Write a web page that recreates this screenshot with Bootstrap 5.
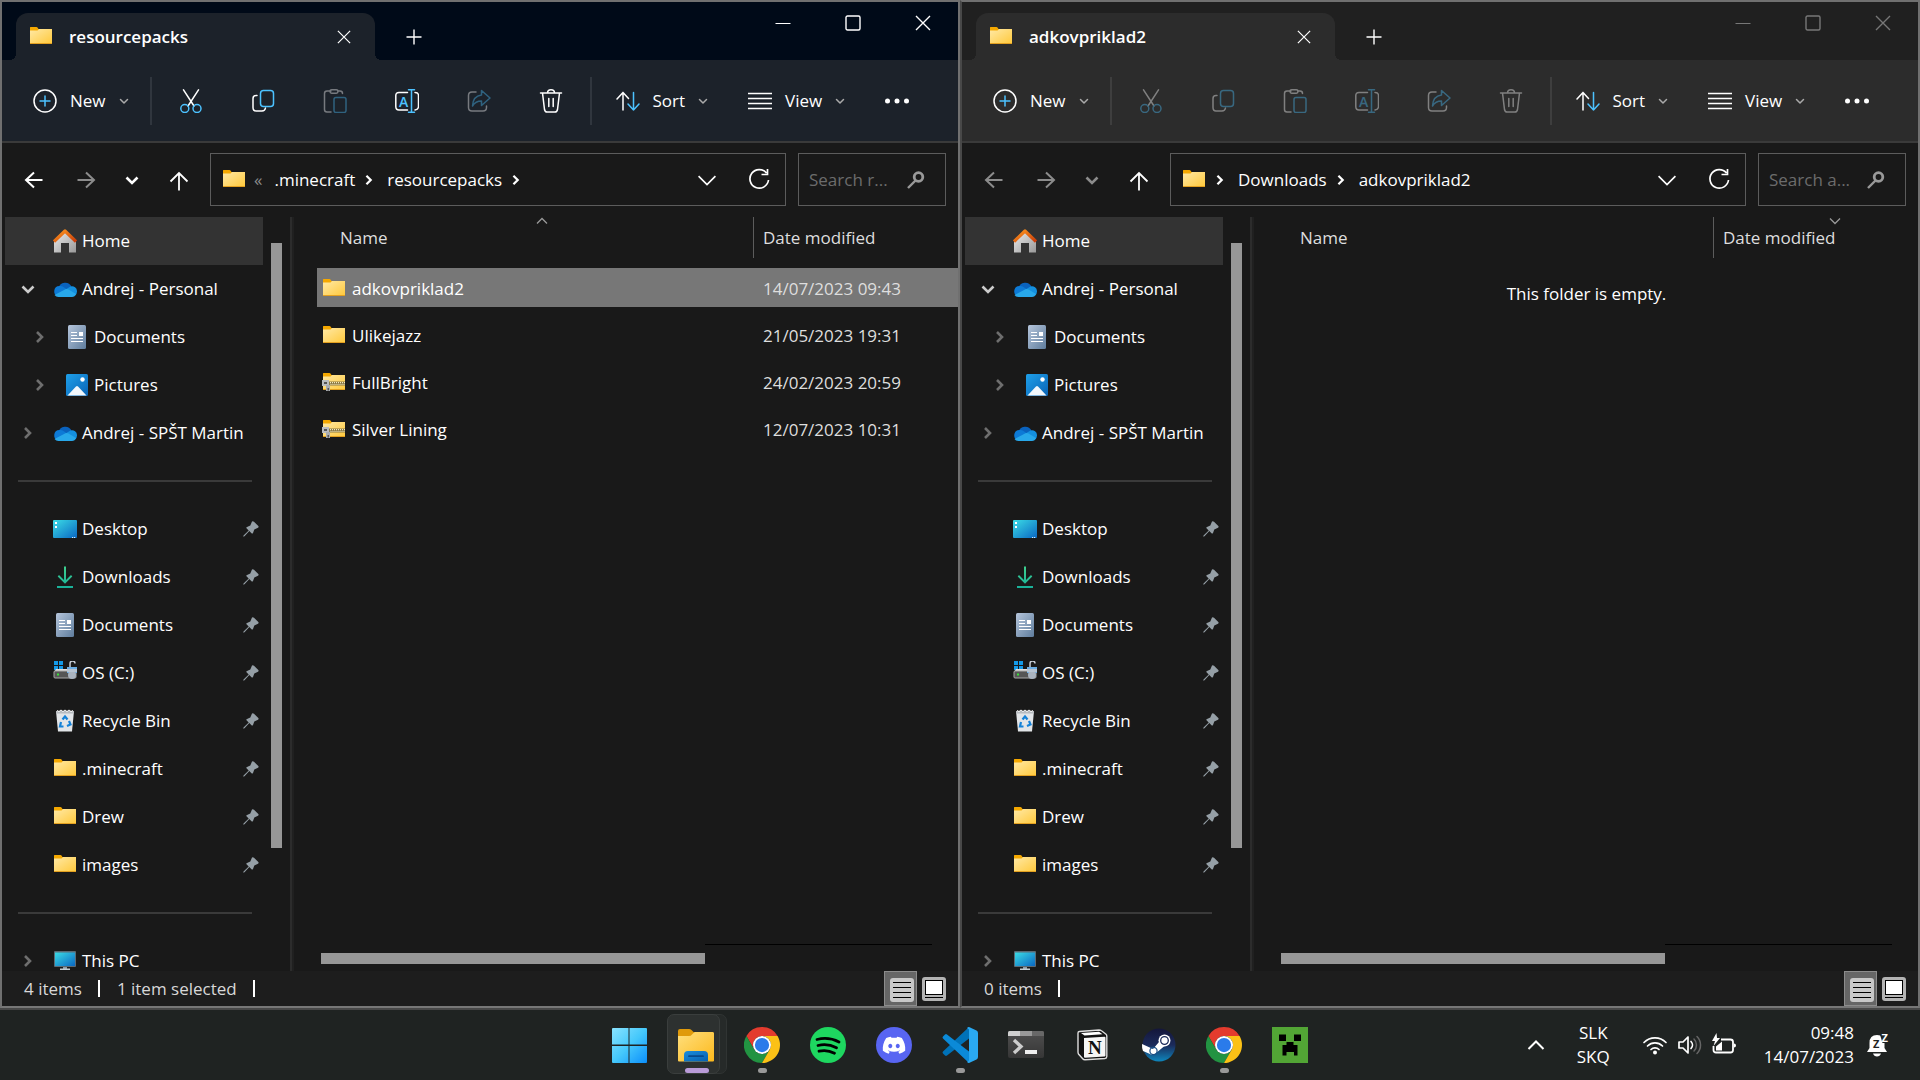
<!DOCTYPE html>
<html lang="en" data-bs-theme="dark">
<head>
<meta charset="utf-8">
<meta name="viewport" content="width=device-width, initial-scale=1">
<title>File Explorer</title>
<link href="https://cdn.jsdelivr.net/npm/bootstrap@5.3.0/dist/css/bootstrap.min.css" rel="stylesheet">
<script src="https://cdn.jsdelivr.net/npm/bootstrap@5.3.0/dist/js/bootstrap.bundle.min.js"></script>
<style>
  body { font-family: "Open Sans", "Noto Sans", sans-serif; font-size: 17px; line-height: 24px; color: #fff; background: #191919; }
  svg { flex: none; display: block; }
  .ln { fill: none; stroke: currentColor; stroke-width: 1.5; stroke-linecap: round; stroke-linejoin: round; }
  .acc { stroke: #4cc2ff; }
  .i24 { width: 24px; height: 24px; }
  .i16 { width: 16px; height: 16px; }
  .plain { background: none; border: 0; padding: 0; color: inherit; display: flex; align-items: center; justify-content: center; text-decoration: none; }
  .plain:disabled { opacity: .4; }
  .desktop { flex: 1 1 0; min-height: 0; }

  .explorer { border: 2px solid #707070; border-bottom-color: #777; flex: 1 1 0; min-width: 0; }
  .explorer.idle { border-left-color: #484848; }
  .titlebar { height: 58px; background: #000a18; padding-left: 14px; }
  .idle .titlebar { background: #202020; }
  .tabitem { width: 359px; height: 47px; background: #1c222a; border-radius: 12px 12px 0 0; padding: 0 18px 0 13px; position: relative; }
  .tabitem::before, .tabitem::after { content: ""; position: absolute; bottom: 0; width: 6px; height: 6px; }
  .tabitem::before { left: -6px; background: radial-gradient(circle at 0 0, transparent 6px, #1c222a 6px); }
  .tabitem::after { right: -6px; background: radial-gradient(circle at 100% 0, transparent 6px, #1c222a 6px); }
  .idle .tabitem { background: #2c2c2c; }
  .idle .tabitem::before { background: radial-gradient(circle at 0 0, transparent 6px, #2c2c2c 6px); }
  .idle .tabitem::after { background: radial-gradient(circle at 100% 0, transparent 6px, #2c2c2c 6px); }
  .tabname { font-weight: 600; }
  .newtab { width: 78px; height: 47px; }
  .capbtn { width: 70px; height: 41px; }
  .idle .capbtn { color: #777; }

  .cmdbar { height: 83px; background: #1c222a; border-bottom: 2px solid #3a3a3a; padding-left: 31px; }
  .idle .cmdbar { background: #2c2c2c; }
  .cmd-text { height: 48px; gap: 13px; }
  .cmd-icon { width: 72px; height: 48px; }
  .vline { width: 2px; height: 48px; background: #30363e; margin: 0 3px 0 21px; }
  .vline.end { margin: 0 24px 0 3px; }
  .idle .vline { background: #3e3e3e; }
  .chev { width: 10px; height: 10px; color: #aaa; }

  .addrbar { height: 74px; padding: 0 12px 1px 6px; }
  .addrbox { height: 53px; border: 1px solid #5c5c5c; min-width: 0; padding-left: 11px; }
  .findbox { width: 148px; height: 53px; border: 1px solid #5c5c5c; margin-left: 12px; padding: 0 20px 0 10px; }
  .findbox input { width: 80px; background: none; border: 0; outline: 0; padding: 0; color: #fff; }
  .findbox input::placeholder { color: #6c6c6c; opacity: 1; }
  .w40 { width: 40px; } .w52 { width: 52px; } .w54 { width: 54px; }
  .dimmed { color: #8c8c8c; }

  .titlebar, .cmdbar, .addrbar, .statusline, .side, .split, .tree, .vscroll, .tabitem, .findbox { flex: none; }
  .panes { flex: 1 1 0; min-height: 0; }
  .side { width: 288px; }
  .tree { width: 258px; margin-left: 3px; }
  .tree a { height: 48px; flex: none; display: flex; align-items: center; color: #fff; text-decoration: none; white-space: nowrap; }
  .tree a.here { background: #333; }
  .tree .exp { width: 48px; display: flex; justify-content: center; padding-right: 3px; color: #6e6e6e; }
  .tree .exp.open { color: #ccc; }
  .tree .kid .exp { width: 60px; padding: 0 0 0 10px; }
  .tree .lbl { margin-left: 5px; }
  .tree .pin { margin-left: auto; margin-right: 4px; color: #959fa6; }
  .tree hr { height: 2px; flex: none; margin: 23px 11px 23px 13px; border: 0; background: #3a3a3a; opacity: 1; }
  .vscroll { width: 11px; margin: 26px 8px 123px 8px; background: #979797; }
  .split { width: 5px; background: #202020; border-left: 2px solid #2c2c2c; border-right: 1px solid #191919; }
  .filepane { padding-left: 22px; min-width: 0; }
  .files { width: 100%; table-layout: fixed; border-collapse: separate; border-spacing: 0 8px; margin-top: -8px; }
  .files th { height: 43px; font-weight: 400; color: #dedede; padding: 0; position: relative; vertical-align: top; }
  .files th span { display: flex; align-items: center; height: 41px; }
  .files th:first-child { width: 437px; }
  .files th:first-child span { padding-left: 23px; border-right: 1px solid #5c5c5c; }
  .files th:last-child span { padding-left: 9px; }
  .sortmark { position: absolute; top: 0; left: 219px; width: 12px; height: 8px; color: #999; }
  .sortmark.down { left: 115px; }
  .files td { height: 39px; padding: 2px 0 0; vertical-align: middle; white-space: nowrap; }
  .files td:last-child { padding-left: 9px; color: #dedede; }
  .files tr.chosen td { background: #777; }
  .files .fname { display: flex; align-items: center; gap: 6px; padding-left: 5px; }
  .empty { text-align: center; margin-top: 6px; padding-right: 22px; }
  .hbar { height: 27px; margin: auto 26px 0 4px; display: flex; }
  .hbar .thumb { flex: 0 0 384px; height: 11px; margin-top: 9px; background: #979797; }
  .hbar .rest { flex: 1; border-top: 1px solid #000; }
  .statusline { height: 35px; background: #1d1d1d; color: #d8d8d8; padding-left: 22px; }
  .statusline i { width: 2px; height: 17px; background: #fff; margin: 0 17px 0 16px; }
  .viewbtn { width: 33px; height: 35px; border: 1px solid transparent; }
  .viewbtn.picked { background: #666; border-color: #8c8c8c; padding: 3px 0 0 2px; }

  .taskbar { height: 72px; flex: none; background: #1f2322; border-top: 2px solid #484848; }
  .app { width: 66px; height: 70px; position: relative; }
  .app svg { width: 36px; height: 36px; }
  .app.run::after { content: ""; position: absolute; bottom: 7px; left: 29px; width: 9px; height: 5px; border-radius: 3px; background: #999; }
  .app.active::after { left: 22px; width: 24px; background: #b99bd8; }
  .app.active svg { position: relative; z-index: 2; }
  .app.active::before, .app .stack { content: ""; position: absolute; left: 4px; top: 4px; width: 53px; height: 60px; border-radius: 7px; background: #2d3130; border: 1px solid #3a3e3d; }
  .app.active::before { z-index: 1; }
  .app.active::after { z-index: 2; }
  .app .stack { left: 11px; background: #262a29; border-color: #303433; }
  .tray { gap: 12px; padding-right: 30px; }
</style>
</head>
<body class="vh-100 d-flex flex-column overflow-hidden">

<svg width="0" height="0" class="position-absolute" aria-hidden="true">
  <defs>
    <linearGradient id="gFold" x1="0" y1="0" x2="1" y2="1"><stop offset="0" stop-color="#ffe9a6"/><stop offset="1" stop-color="#ffc93c"/></linearGradient>
    <linearGradient id="gRoof" x1="0" y1="0" x2="1" y2="1"><stop offset="0" stop-color="#ff9a1f"/><stop offset="1" stop-color="#c93a0a"/></linearGradient>
    <linearGradient id="gWall" x1="0" y1="0" x2="1" y2="1"><stop offset="0" stop-color="#eee"/><stop offset="1" stop-color="#999"/></linearGradient>
    <linearGradient id="gDoc" x1="0" y1="0" x2="1" y2="1"><stop offset="0" stop-color="#b6c6dc"/><stop offset="1" stop-color="#5f7d9d"/></linearGradient>
    <linearGradient id="gPic" x1="0" y1="0" x2="1" y2="1"><stop offset="0" stop-color="#1ea0ea"/><stop offset="1" stop-color="#0a63b5"/></linearGradient>
    <linearGradient id="gDesk" x1="0" y1="0" x2="1" y2="1"><stop offset="0" stop-color="#3bdce6"/><stop offset="1" stop-color="#0a67c2"/></linearGradient>
    <linearGradient id="gDown" x1="0" y1="0" x2="0" y2="1"><stop offset="0" stop-color="#3fcf8e"/><stop offset="1" stop-color="#18b09a"/></linearGradient>
    <linearGradient id="gWin" gradientUnits="userSpaceOnUse" x1="0" y1="0" x2="36" y2="36"><stop offset="0" stop-color="#8be4ff"/><stop offset=".5" stop-color="#45c8fb"/><stop offset="1" stop-color="#0a8dfb"/></linearGradient>
    <linearGradient id="gBig" x1="0" y1="0" x2="1" y2="1"><stop offset="0" stop-color="#ffdf7e"/><stop offset="1" stop-color="#fcb91c"/></linearGradient>
    <linearGradient id="gTray" x1="0" y1="0" x2="1" y2="1"><stop offset="0" stop-color="#1c8ddc"/><stop offset="1" stop-color="#0660b0"/></linearGradient>
    <linearGradient id="gSteam" x1="0" y1="0" x2="0" y2="1"><stop offset="0" stop-color="#14163a"/><stop offset=".5" stop-color="#1b2a5a"/><stop offset="1" stop-color="#0e86bd"/></linearGradient>
    <linearGradient id="gTerm" x1="0" y1="0" x2="0" y2="1"><stop offset="0" stop-color="#505050"/><stop offset="1" stop-color="#363636"/></linearGradient>
  </defs>
  <symbol id="folder" viewBox="0 0 24 24"><path d="M1 2.500q0-.5.500-.5h6q.6 0 1 .5l1 1.500H22.500q.5 0 .5.500V8H1z" fill="#f5a800"/><path d="M1 5.500h7.500L10 4h13v14.500H1z" fill="url(#gFold)"/><path d="M1 18.500h22" stroke="#e3a020"/></symbol>
  <symbol id="zipf" viewBox="0 0 24 24"><use href="#folder"/><path d="M5 10.500h18v4H5z" fill="#8c7a45"/><path d="M8 11.700h15M8.500 13.500h14.500" stroke="#f3e9c0" stroke-width="1.200" stroke-dasharray="1 1"/><path d="M0 9h7v6H0z" fill="#b9bcc0"/><path d="M2 11h3v2H2z" fill="#555"/><path d="M4 14h4v6H4z" fill="#a9acb0"/><path d="M5.500 17h1.500v2.500H5.500z" fill="#555"/></symbol>
  <symbol id="house" viewBox="0 0 24 24"><path d="M1 12 12 2l11 10v11.500H16V14H8v9.500H1z" fill="url(#gWall)"/><path d="M1 12.500 12 2l11 10.500" fill="none" stroke="url(#gRoof)" stroke-width="3.200" stroke-linejoin="round"/></symbol>
  <symbol id="cloud" viewBox="0 0 24 24"><path d="M5.500 11A7 7 0 0 1 18.500 9.500L14 15 5 12z" fill="#0a62bd"/><path d="M6.500 9a5.500 5.500 0 0 1 4 1l9 6.500-12 3H5.500A5.300 5.300 0 0 1 6.500 9z" fill="#0d7ad6"/><path d="M12.500 12.500 17.500 9.500a5 5 0 0 1 6.500 5q0 2.500-2 4z" fill="#1490df"/><path d="M1.500 18l11-5.700q1.500-.6 3 .2L23 17q-1 3-4 3H5.500q-2.500 0-4-2z" fill="#28a8ea"/></symbol>
  <symbol id="doc" viewBox="0 0 24 24"><rect x="3" y="0" width="18" height="24" rx="1.500" fill="url(#gDoc)"/><path d="M6 7.500h6M6 10.500h6M6 13.500h12M6 16.500h12" stroke="#fff" stroke-width="1.200"/><path d="M14 7h4v4h-4z" fill="#fff"/></symbol>
  <symbol id="pic" viewBox="0 0 24 24"><rect x="1" y="1" width="22" height="22" rx="1.500" fill="url(#gPic)"/><path d="M2.500 22.500 11 13.500q1-1 2 0l8.500 9z" fill="#f2f7fc"/><circle cx="17.500" cy="6.500" r="2.200" fill="#fff"/></symbol>
  <symbol id="desk" viewBox="0 0 24 24"><rect x="0" y="3" width="24" height="18" rx="1" fill="url(#gDesk)"/><path d="M2 5h2v2H2zM2 9h2v2H2z" fill="#fff"/><path d="M19 20.500h1.200M21 20.500h1.200" stroke="#cfe9ff"/></symbol>
  <symbol id="down" viewBox="0 0 24 24"><path d="M11 1.500h2V15l5-5 1.300 1.400L12 18.800l-7.300-7.400L6 10l5 5zM4 21h16v2H4z" fill="url(#gDown)"/></symbol>
  <symbol id="drive" viewBox="0 0 24 24"><path d="M1 0h4v4H1zM6 0h4v4H6zM1 5h4v4H1zM6 5h4v4H6z" fill="#149ae8"/><path d="M3 8h19l1 3H1z" fill="#ddd"/><rect x="1" y="10" width="22" height="7" rx="1" fill="#555" stroke="#aaa"/><path d="M4 12.500h2v2H4z" fill="#3be03b"/><path d="M17 6V2.500a2.500 2.500 0 0 1 5 0" fill="none" stroke="#c5cbd3" stroke-width="1.500"/><path d="M14 6h10v6H14z" fill="#6aaee6"/><circle cx="19" cy="14" r="4" fill="#aab4c0"/><path d="M14 8h10v3H14z" fill="#b7c4d2"/></symbol>
  <symbol id="bin" viewBox="0 0 24 24"><path d="M3 2h18l-2 20.500H5z" fill="#e2e5e8"/><path d="M3 2h18l-.3 2.500H3.300z" fill="#b8bcc0"/><path d="M4 1.500l2 1 2-1.500 2 1.500L12 1l2 1.500L16 1l2 1.500 2-1" stroke="#fff" fill="none"/><path d="M9.500 10.500 12 7.500l2.500 3M16 12l1.500 3.500-3.500 1.500M10.500 17.500H7L8 13" fill="none" stroke="#1582d8" stroke-width="2.200"/></symbol>
  <symbol id="pc" viewBox="0 0 24 24"><rect x="1" y="2" width="22" height="16" rx="1" fill="#5c6a74"/><path d="M2 3.500h20V17H2z" fill="url(#gDesk)"/><path d="M10 18h4v2h-4z" fill="#8c9aa5"/><path d="M7 19.500h10V21H7z" fill="#c3ccd3"/></symbol>
  <symbol id="pin" viewBox="0 0 16 16"><path d="M9 .500Q10 0 11 .800L15.300 5q.8 1-.3 1.700L11.300 8.500 10 12q-.5 1-1.500.3L6.300 10 1.500 15.300.300 15.700.500 14.500 5.700 9.500 3.500 7.300Q3 6.300 4 6L7.300 4.500z" fill="currentColor"/></symbol>
  <symbol id="cR" viewBox="0 0 14 14"><path d="M4 2l5 5-5 5" fill="none" stroke="currentColor" stroke-width="2.600"/></symbol>
  <symbol id="cD" viewBox="0 0 14 14"><path d="M1.500 4.500 7 10l5.500-5.500" fill="none" stroke="currentColor" stroke-width="2.600"/></symbol>
  <symbol id="chevD" viewBox="0 0 10 10"><path class="ln" d="M1.500 3.500 5 7l3.500-3.500"/></symbol>
  <symbol id="xx" viewBox="0 0 16 16"><path d="M1 1l14 14M15 1 1 15" fill="none" stroke="currentColor" stroke-width="1.400"/></symbol>
  <symbol id="plus" viewBox="0 0 16 16"><path d="M8 .500v15M.500 8h15" fill="none" stroke="currentColor" stroke-width="1.400"/></symbol>
  <symbol id="min" viewBox="0 0 16 16"><path d="M.500 8.500h15" stroke="currentColor"/></symbol>
  <symbol id="max" viewBox="0 0 16 16"><rect x="1" y="1" width="14" height="14" rx="1.500" fill="none" stroke="currentColor" stroke-width="1.400"/></symbol>
  <symbol id="newi" viewBox="0 0 24 24"><circle class="ln" cx="12" cy="12" r="11"/><path class="ln acc" d="M12 7v10M7 12h10"/></symbol>
  <symbol id="cut" viewBox="0 0 24 24"><path class="ln" d="M4.500.800 15 17M19.500.800 9 17"/><circle class="ln acc" cx="5.800" cy="19.500" r="4"/><circle class="ln acc" cx="18" cy="19.500" r="4"/></symbol>
  <symbol id="copy" viewBox="0 0 24 24"><path class="ln" d="M6 6.500H5Q2 6.500 2 9.500v9Q2 22 5 22h6q3 0 3.500-3"/><rect class="ln acc" x="9.500" y="1.500" width="13" height="16" rx="3"/></symbol>
  <symbol id="paste" viewBox="0 0 24 24"><path class="ln" d="M8 2H4Q1.500 2 1.500 4.500v16Q1.500 23 4 23h4M15 2h2q2.500 0 2.500 2.500"/><rect class="ln" x="7" y=".8" width="8" height="3.500" rx="1.700"/><rect class="ln acc" x="11" y="8.500" width="12" height="15" rx="2"/></symbol>
  <symbol id="ren" viewBox="0 0 24 24"><path class="ln" d="M12.500 3.500H4Q.800 3.500.800 6.500v11q0 3.500 3.200 3.500h8.500M20 3.500q3.500 0 3.500 3v11q0 3-3.500 3.500"/><path class="ln acc" d="M13.500.800h6M13.500 23.200h6M16.500.800v22.400"/><text x="4" y="17.500" font-family="Open Sans, sans-serif" font-size="14" font-weight="600" fill="#4cc2ff">A</text></symbol>
  <symbol id="share" viewBox="0 0 24 24"><path class="ln" d="M9 3H5Q1.500 3 1.500 6.500v12Q1.500 22 5 22h11q3.500 0 3.500-3.500V17"/><path class="ln acc" d="M14.500 1.500 23 9l-8.500 7.500V12Q8.500 12 5.500 17 6 7 14.500 6z"/></symbol>
  <symbol id="trash" viewBox="0 0 24 24"><path class="ln" d="M1.500 4h21M8.500 4q0-3.200 3.500-3.200T15.500 4M3.500 4l2 16.500Q6 23 8 23h8q2 0 2.500-2.500L20.500 4M9.800 9.500v8M14.200 9.500v8"/></symbol>
  <symbol id="sort" viewBox="0 0 24 24"><path class="ln" d="M7 21V3.500M1 10l6-6.500 5.500 6"/><path class="ln acc" d="M17.500 3.500V21M12 15l5.500 6 5.500-6"/></symbol>
  <symbol id="view" viewBox="0 0 24 24"><path d="M0 4.500h24M0 9.500h24M0 14.500h24M0 19.500h24" stroke="currentColor" stroke-width="1.500"/></symbol>
  <symbol id="dots" viewBox="0 0 24 24"><g fill="currentColor"><circle cx="2.500" cy="12" r="2.500"/><circle cx="12" cy="12" r="2.500"/><circle cx="21.500" cy="12" r="2.500"/></g></symbol>
  <symbol id="left" viewBox="0 0 24 24"><path d="M20.500 12H4M12 4.500 4 12l8 7.500" fill="none" stroke="currentColor" stroke-width="2"/></symbol>
  <symbol id="right" viewBox="0 0 24 24"><path d="M3.500 12H20M12 4.500 20 12l-8 7.500" fill="none" stroke="currentColor" stroke-width="2"/></symbol>
  <symbol id="up" viewBox="0 0 24 24"><path d="M12 22.500V5M3.500 13.500 12 5l8.500 8.500" fill="none" stroke="currentColor" stroke-width="1.800"/></symbol>
  <symbol id="bigD" viewBox="0 0 16 16"><path d="M.500 4.500 8 12l7.500-7.500" fill="none" stroke="currentColor" stroke-width="1.500"/></symbol>
  <symbol id="refresh" viewBox="0 0 24 24"><path d="M19.500 5A9.300 9.300 0 1 0 21.500 12M14.500 6.500h6V1" fill="none" stroke="currentColor" stroke-width="1.700"/></symbol>
  <symbol id="lens" viewBox="0 0 18 18"><circle cx="11.500" cy="6" r="4.300" fill="none" stroke="currentColor" stroke-width="2.800"/><path d="M8.500 9.500 1 17" stroke="currentColor" stroke-width="2.400"/></symbol>
  <symbol id="vList" viewBox="0 0 24 24"><rect width="24" height="24" rx="3" fill="#c8c8c8"/><path d="M3 4.500h18M3 9.500h18M3 14.500h18M3 19.500h18" stroke="#000"/></symbol>
  <symbol id="vBig" viewBox="0 0 24 24"><rect width="24" height="24" rx="3" fill="#b4b4b4"/><rect x="3.500" y="3.500" width="17" height="14" fill="#fff" stroke="#000"/><path d="M3 20.500h18" stroke="#000"/></symbol>
  <symbol id="tip" viewBox="0 0 12 8"><path d="M1 6.500l5-5 5 5" fill="none" stroke="currentColor" stroke-width="1.300"/></symbol>
  <symbol id="tipD" viewBox="0 0 12 8"><path d="M1 1.500l5 5 5-5" fill="none" stroke="currentColor" stroke-width="1.300"/></symbol>
  <symbol id="chrome" viewBox="0 0 48 48"><path d="M24 12H44.780A24 24 0 0 0 3.210 12L13.610 30A12 12 0 0 1 24 12Z" fill="#e33b2e"/><path d="M34.390 30 24 48A24 24 0 0 1 3.210 12L13.610 30A12 12 0 0 0 34.390 30Z" fill="#229342"/><path d="M24 12A12 12 0 0 1 34.390 30L24 48A24 24 0 0 0 44.780 12Z" fill="#fbc116"/><circle cx="24" cy="24" r="12" fill="#fff"/><circle cx="24" cy="24" r="9.500" fill="#2a7bea"/></symbol>
</svg>

<main class="desktop d-flex">

  <section class="explorer d-flex flex-column" aria-label="resourcepacks">
    <header class="titlebar d-flex">
      <div class="tabitem d-flex align-items-center align-self-end">
        <svg class="i24"><use href="#folder"/></svg>
        <span class="tabname ms-3">resourcepacks</span>
        <button class="plain ms-auto" aria-label="Close tab"><svg width="26" height="14"><use href="#xx"/></svg></button>
      </div>
      <button class="plain newtab align-self-end" aria-label="New tab"><svg class="i16"><use href="#plus"/></svg></button>
      <div class="d-flex ms-auto">
        <button class="plain capbtn" aria-label="Minimize"><svg class="i16"><use href="#min"/></svg></button>
        <button class="plain capbtn" aria-label="Maximize"><svg class="i16"><use href="#max"/></svg></button>
        <button class="plain capbtn" aria-label="Close"><svg class="i16"><use href="#xx"/></svg></button>
      </div>
    </header>
    <div class="cmdbar d-flex align-items-center" role="toolbar">
      <button class="plain cmd-text"><svg class="i24"><use href="#newi"/></svg>New <svg class="chev"><use href="#chevD"/></svg></button>
      <div class="vline"></div>
      <button class="plain cmd-icon" aria-label="Cut"><svg class="i24"><use href="#cut"/></svg></button>
      <button class="plain cmd-icon" aria-label="Copy"><svg class="i24"><use href="#copy"/></svg></button>
      <button class="plain cmd-icon" aria-label="Paste" disabled><svg class="i24"><use href="#paste"/></svg></button>
      <button class="plain cmd-icon" aria-label="Rename"><svg class="i24"><use href="#ren"/></svg></button>
      <button class="plain cmd-icon" aria-label="Share" disabled><svg class="i24"><use href="#share"/></svg></button>
      <button class="plain cmd-icon" aria-label="Delete"><svg class="i24"><use href="#trash"/></svg></button>
      <div class="vline end"></div>
      <button class="plain cmd-text"><svg class="i24"><use href="#sort"/></svg>Sort <svg class="chev"><use href="#chevD"/></svg></button>
      <button class="plain cmd-text ms-4 ps-3"><svg class="i24"><use href="#view"/></svg>View <svg class="chev"><use href="#chevD"/></svg></button>
      <button class="plain cmd-icon ms-3" aria-label="More"><svg class="i24"><use href="#dots"/></svg></button>
    </div>
    <div class="addrbar d-flex align-items-center">
      <button class="plain w52" aria-label="Back"><svg class="i24"><use href="#left"/></svg></button>
      <button class="plain w52 dimmed" aria-label="Forward"><svg class="i24"><use href="#right"/></svg></button>
      <button class="plain w40" aria-label="Recent"><svg width="14" height="14"><use href="#cD"/></svg></button>
      <button class="plain w54 me-1" aria-label="Up"><svg class="i24"><use href="#up"/></svg></button>
      <div class="addrbox d-flex align-items-center flex-grow-1">
        <svg class="i24"><use href="#folder"/></svg>
        <span class="dimmed ms-2">«</span>
        <a href="#" class="plain ms-2 ps-1">.minecraft</a>
        <svg width="12" height="12" class="mx-2"><use href="#cR"/></svg>
        <a href="#" class="plain ps-1">resourcepacks</a>
        <svg width="12" height="12" class="ms-2"><use href="#cR"/></svg>
        <button class="plain w52 ms-auto" aria-label="Previous locations"><svg width="18" height="18"><use href="#bigD"/></svg></button>
        <button class="plain w52" aria-label="Refresh"><svg class="i24"><use href="#refresh"/></svg></button>
      </div>
      <div class="findbox d-flex align-items-center justify-content-between">
        <input type="text" placeholder="Search r..." aria-label="Search resourcepacks">
        <svg width="18" height="18" color="#999"><use href="#lens"/></svg>
      </div>
    </div>
    <div class="panes d-flex">
      <div class="side d-flex overflow-hidden"></div>
      <div class="split"></div>
      <div class="filepane d-flex flex-column flex-grow-1">
        <table class="files">
          <thead><tr><th scope="col"><span>Name</span><svg class="sortmark"><use href="#tip"/></svg></th><th scope="col"><span>Date modified</span></th></tr></thead>
          <tbody>
            <tr class="chosen"><td><div class="fname"><svg class="i24"><use href="#folder"/></svg>adkovpriklad2</div></td><td>14/07/2023 09:43</td></tr>
            <tr><td><div class="fname"><svg class="i24"><use href="#folder"/></svg>Ulikejazz</div></td><td>21/05/2023 19:31</td></tr>
            <tr><td><div class="fname"><svg class="i24"><use href="#zipf"/></svg>FullBright</div></td><td>24/02/2023 20:59</td></tr>
            <tr><td><div class="fname"><svg class="i24"><use href="#zipf"/></svg>Silver Lining</div></td><td>12/07/2023 10:31</td></tr>
          </tbody>
        </table>
        <div class="hbar"><div class="thumb"></div><div class="rest"></div></div>
      </div>
    </div>
    <footer class="statusline d-flex align-items-center">
      <span>4 items</span><i></i><span>1 item selected</span><i></i>
      <button class="plain viewbtn picked ms-auto" aria-label="Details view"><svg class="i24"><use href="#vList"/></svg></button>
      <button class="plain viewbtn me-2" aria-label="Large icons"><svg class="i24"><use href="#vBig"/></svg></button>
    </footer>
  </section>

  <section class="explorer idle d-flex flex-column" aria-label="adkovpriklad2">
    <header class="titlebar d-flex">
      <div class="tabitem d-flex align-items-center align-self-end">
        <svg class="i24"><use href="#folder"/></svg>
        <span class="tabname ms-3">adkovpriklad2</span>
        <button class="plain ms-auto" aria-label="Close tab"><svg width="26" height="14"><use href="#xx"/></svg></button>
      </div>
      <button class="plain newtab align-self-end" aria-label="New tab"><svg class="i16"><use href="#plus"/></svg></button>
      <div class="d-flex ms-auto">
        <button class="plain capbtn" aria-label="Minimize"><svg class="i16"><use href="#min"/></svg></button>
        <button class="plain capbtn" aria-label="Maximize"><svg class="i16"><use href="#max"/></svg></button>
        <button class="plain capbtn" aria-label="Close"><svg class="i16"><use href="#xx"/></svg></button>
      </div>
    </header>
    <div class="cmdbar d-flex align-items-center" role="toolbar">
      <button class="plain cmd-text"><svg class="i24"><use href="#newi"/></svg>New <svg class="chev"><use href="#chevD"/></svg></button>
      <div class="vline"></div>
      <button class="plain cmd-icon" aria-label="Cut" disabled><svg class="i24"><use href="#cut"/></svg></button>
      <button class="plain cmd-icon" aria-label="Copy" disabled><svg class="i24"><use href="#copy"/></svg></button>
      <button class="plain cmd-icon" aria-label="Paste" disabled><svg class="i24"><use href="#paste"/></svg></button>
      <button class="plain cmd-icon" aria-label="Rename" disabled><svg class="i24"><use href="#ren"/></svg></button>
      <button class="plain cmd-icon" aria-label="Share" disabled><svg class="i24"><use href="#share"/></svg></button>
      <button class="plain cmd-icon" aria-label="Delete" disabled><svg class="i24"><use href="#trash"/></svg></button>
      <div class="vline end"></div>
      <button class="plain cmd-text"><svg class="i24"><use href="#sort"/></svg>Sort <svg class="chev"><use href="#chevD"/></svg></button>
      <button class="plain cmd-text ms-4 ps-3"><svg class="i24"><use href="#view"/></svg>View <svg class="chev"><use href="#chevD"/></svg></button>
      <button class="plain cmd-icon ms-3" aria-label="More"><svg class="i24"><use href="#dots"/></svg></button>
    </div>
    <div class="addrbar d-flex align-items-center">
      <button class="plain w52 dimmed" aria-label="Back"><svg class="i24"><use href="#left"/></svg></button>
      <button class="plain w52 dimmed" aria-label="Forward"><svg class="i24"><use href="#right"/></svg></button>
      <button class="plain w40 dimmed" aria-label="Recent"><svg width="14" height="14"><use href="#cD"/></svg></button>
      <button class="plain w54 me-1" aria-label="Up"><svg class="i24"><use href="#up"/></svg></button>
      <div class="addrbox d-flex align-items-center flex-grow-1">
        <svg class="i24"><use href="#folder"/></svg>
        <svg width="12" height="12" class="mx-2"><use href="#cR"/></svg>
        <a href="#" class="plain ps-1">Downloads</a>
        <svg width="12" height="12" class="mx-2"><use href="#cR"/></svg>
        <a href="#" class="plain ps-1">adkovpriklad2</a>
        <button class="plain w52 ms-auto" aria-label="Previous locations"><svg width="18" height="18"><use href="#bigD"/></svg></button>
        <button class="plain w52" aria-label="Refresh"><svg class="i24"><use href="#refresh"/></svg></button>
      </div>
      <div class="findbox d-flex align-items-center justify-content-between">
        <input type="text" placeholder="Search a..." aria-label="Search adkovpriklad2">
        <svg width="18" height="18" color="#999"><use href="#lens"/></svg>
      </div>
    </div>
    <div class="panes d-flex">
      <div class="side d-flex overflow-hidden"></div>
      <div class="split"></div>
      <div class="filepane d-flex flex-column flex-grow-1">
        <table class="files">
          <thead><tr><th scope="col"><span>Name</span></th><th scope="col"><span>Date modified</span><svg class="sortmark down"><use href="#tipD"/></svg></th></tr></thead>
        </table>
        <div class="empty pt-2">This folder is empty.</div>
        <div class="hbar"><div class="thumb"></div><div class="rest"></div></div>
      </div>
    </div>
    <footer class="statusline d-flex align-items-center">
      <span>0 items</span><i></i>
      <button class="plain viewbtn picked ms-auto" aria-label="Details view"><svg class="i24"><use href="#vList"/></svg></button>
      <button class="plain viewbtn me-2" aria-label="Large icons"><svg class="i24"><use href="#vBig"/></svg></button>
    </footer>
  </section>
</main>

<template id="sidebar">
  <nav class="tree d-flex flex-column" aria-label="Folders">
    <a href="#" class="here"><span class="exp"></span><svg class="i24"><use href="#house"/></svg><span class="lbl">Home</span></a>
    <a href="#"><span class="exp open"><svg width="14" height="14"><use href="#cD"/></svg></span><svg class="i24"><use href="#cloud"/></svg><span class="lbl">Andrej - Personal</span></a>
    <a href="#" class="kid"><span class="exp"><svg width="14" height="14"><use href="#cR"/></svg></span><svg class="i24"><use href="#doc"/></svg><span class="lbl">Documents</span></a>
    <a href="#" class="kid"><span class="exp"><svg width="14" height="14"><use href="#cR"/></svg></span><svg class="i24"><use href="#pic"/></svg><span class="lbl">Pictures</span></a>
    <a href="#"><span class="exp"><svg width="14" height="14"><use href="#cR"/></svg></span><svg class="i24"><use href="#cloud"/></svg><span class="lbl">Andrej - SPŠT Martin</span></a>
    <hr>
    <a href="#"><span class="exp"></span><svg class="i24"><use href="#desk"/></svg><span class="lbl">Desktop</span><svg class="pin i16"><use href="#pin"/></svg></a>
    <a href="#"><span class="exp"></span><svg class="i24"><use href="#down"/></svg><span class="lbl">Downloads</span><svg class="pin i16"><use href="#pin"/></svg></a>
    <a href="#"><span class="exp"></span><svg class="i24"><use href="#doc"/></svg><span class="lbl">Documents</span><svg class="pin i16"><use href="#pin"/></svg></a>
    <a href="#"><span class="exp"></span><svg class="i24"><use href="#drive"/></svg><span class="lbl">OS (C:)</span><svg class="pin i16"><use href="#pin"/></svg></a>
    <a href="#"><span class="exp"></span><svg class="i24"><use href="#bin"/></svg><span class="lbl">Recycle Bin</span><svg class="pin i16"><use href="#pin"/></svg></a>
    <a href="#"><span class="exp"></span><svg class="i24"><use href="#folder"/></svg><span class="lbl">.minecraft</span><svg class="pin i16"><use href="#pin"/></svg></a>
    <a href="#"><span class="exp"></span><svg class="i24"><use href="#folder"/></svg><span class="lbl">Drew</span><svg class="pin i16"><use href="#pin"/></svg></a>
    <a href="#"><span class="exp"></span><svg class="i24"><use href="#folder"/></svg><span class="lbl">images</span><svg class="pin i16"><use href="#pin"/></svg></a>
    <hr>
    <a href="#"><span class="exp"><svg width="14" height="14"><use href="#cR"/></svg></span><svg class="i24"><use href="#pc"/></svg><span class="lbl">This PC</span></a>
  </nav>
  <div class="vscroll"></div>
</template>

<footer class="taskbar d-flex">
  <div class="flex-fill w-25"></div>
  <div class="d-flex">
    <button class="plain app" aria-label="Start"><svg viewBox="0 0 36 36"><path d="M0 2Q0 1 1 1H16.500V17.500H0zM17.500 1H34q1 0 1 1V17.500H17.500zM0 19H16.500V36H1q-1 0-1-1zM17.500 19H35V35q0 1-1 1H17.500z" fill="url(#gWin)"/></svg></button>
    <button class="plain app run active" aria-label="File Explorer"><span class="stack"></span><svg viewBox="0 0 36 36"><path d="M0 4q0-2 2-2h9q1.500 0 2.500 1l2 2H34q2 0 2 2v8H0z" fill="#e09a0b"/><path d="M0 9h11q2 0 3-1.500T17 5h17.500Q36 5 36 6.500V33.500q0 1-1 1H1q-1 0-1-1z" fill="url(#gBig)"/><path d="M6 34.500V28q0-4 4-4h16q4 0 4 4v6.500z" fill="url(#gTray)"/><path d="M11 29.200h14" stroke="#084a8c" stroke-width="1.800" stroke-linecap="round"/></svg></button>
    <button class="plain app run" aria-label="Chrome"><svg><use href="#chrome"/></svg></button>
    <button class="plain app" aria-label="Spotify"><svg viewBox="0 0 36 36"><circle cx="18" cy="18" r="18" fill="#1ed760"/><path d="M7 12.500q11.500-3 22 2.500M8 18.500q9.500-2.500 18.500 2.300M9 24.200q8-2 15.500 2" fill="none" stroke="#000" stroke-width="2.800" stroke-linecap="round"/></svg></button>
    <button class="plain app" aria-label="Discord"><svg viewBox="-50 -66 228 228"><circle cx="64" cy="48" r="114" fill="#5865f2"/><path fill="#fff" transform="translate(-7 -5) scale(1.120)" d="M107.700,8.070A105.150,105.150,0,0,0,81.470,0a72.060,72.060,0,0,0-3.360,6.830A97.680,97.680,0,0,0,49,6.830,72.370,72.370,0,0,0,45.640,0,105.890,105.890,0,0,0,19.390,8.090C2.790,32.650-1.710,56.600.540,80.210h0A105.730,105.730,0,0,0,32.710,96.360,77.700,77.700,0,0,0,39.600,85.250a68.420,68.420,0,0,1-10.850-5.180c.910-.660,1.800-1.340,2.660-2a75.570,75.570,0,0,0,64.320,0c.870.710,1.760,1.390,2.660,2a68.680,68.680,0,0,1-10.870,5.190,77,77,0,0,0,6.890,11.100A105.250,105.250,0,0,0,126.600,80.220h0C129.240,52.840,122.090,29.110,107.700,8.070ZM42.450,65.690C36.180,65.690,31,60,31,53s5-12.740,11.430-12.740S54,46,53.890,53,48.840,65.690,42.450,65.690Zm42.240,0C78.410,65.690,73.250,60,73.250,53s5-12.740,11.440-12.740S96.230,46,96.120,53,91.080,65.690,84.690,65.690Z"/></svg></button>
    <button class="plain app run" aria-label="Visual Studio Code"><svg viewBox="0 0 36 36"><path d="M27 0 1 24.500q-1 1 0 2l2 2q1 .8 2 0L27 11.500z" fill="#0072b8"/><path d="M27 36 1 11.500q-1-1 0-2l2-2q1-.8 2 0L27 24.500z" fill="#0b8ad8"/><path d="M27 0l7.500 3.500Q36 4.200 36 6v24q0 1.800-1.500 2.500L27 36q-1 0-2-1l2-1.500V2.500L25 1q1-1 2-1z" fill="#2aa9f2"/></svg></button>
    <button class="plain app" aria-label="Terminal"><svg viewBox="0 0 36 36"><rect y="4" width="36" height="27" rx="2" fill="url(#gTerm)"/><path d="M0 9V5.500Q0 4 1.500 4H12v5z" fill="#d0d0d0"/><path d="M12 4h12v5H12z" fill="#999"/><path d="M24 4h10.500Q36 4 36 5.500V9H24z" fill="#686868"/><path d="M6 13l7 6.500L6 26" fill="none" stroke="#ccc" stroke-width="3.400"/><path d="M17 23h12v4H17z" fill="#eee"/></svg></button>
    <button class="plain app" aria-label="Notion"><svg viewBox="0 0 36 36"><path d="M5.500 4.500 25 3q1.500 0 2.500.8l4.500 3.400q.8.600.8 2V29.500q0 1.800-2 2L11 32.800q-1.500 0-2.500-1.300L4.500 27Q4 26 4 25V6q0-1.400 1.500-1.500z" fill="#111" stroke="#ddd" stroke-width="1.400"/><path d="M10 11l20.500-1.200q1 0 1 1V28.500q0 1-1 1.100L11 30.800q-1 0-1-1z" fill="#f6f6f6"/><path d="M7 6l18-1.200 3.500 2.400-18 1.200z" fill="#fff"/><text x="20.800" y="26.800" font-family="Liberation Serif, serif" font-weight="700" font-size="19" text-anchor="middle" fill="#111">N</text></svg></button>
    <button class="plain app" aria-label="Steam"><svg viewBox="0 0 36 36"><circle cx="19" cy="18" r="16.500" fill="url(#gSteam)"/><path d="M2 17 13 22l6-7 8 2-11 9a4.500 4.500 0 0 1-6 1L3 24A17 17 0 0 1 2 17z" fill="#fff"/><circle cx="13.500" cy="24" r="3.600" fill="none" stroke="#1b4f85" stroke-width="1.200"/><circle cx="24.500" cy="13.500" r="6" fill="#fff"/><circle cx="24.500" cy="13.500" r="3.800" fill="#fff" stroke="#1b2a5a" stroke-width="1.300"/></svg></button>
    <button class="plain app run" aria-label="Chrome profile"><svg><use href="#chrome"/></svg></button>
    <button class="plain app" aria-label="Minecraft"><svg viewBox="0 0 36 36"><path d="M0 0h36v36H0z" fill="#52a535"/><path d="M7 7.500h7v6.500H7zM22 7.500h7v6.500h-7zM14.500 15h7v3h4v10.500H22V25h-7.500v3.500H10.500V18h4z" fill="#000"/></svg></button>
  </div>
  <div class="tray flex-fill w-25 d-flex align-items-center justify-content-end">
    <button class="plain" aria-label="Hidden icons"><svg width="18" height="12" viewBox="0 0 18 12"><path d="M1.500 10 9 2.500l7.500 7.500" fill="none" stroke="currentColor" stroke-width="2"/></svg></button>
    <button class="plain text-center mx-3 px-1">SLK<br>SKQ</button>
    <button class="plain gap-2 me-3" aria-label="Network, volume, battery">
      <svg width="26" height="24" viewBox="0 0 24 24"><path d="M1 9.500a15.500 15.500 0 0 1 22 0M4.500 13a10.600 10.600 0 0 1 15 0M8 16.500a5.700 5.700 0 0 1 8 0" fill="none" stroke="#fff" stroke-width="1.700" stroke-linecap="round"/><circle cx="12" cy="19.500" r="2" fill="#fff"/></svg>
      <svg width="28" height="24" viewBox="0 0 26 24"><path d="M2 9h4l5-5v16l-5-5H2z" fill="none" stroke="#fff" stroke-width="1.700" stroke-linejoin="round"/><path d="M14 8.500a5 5 0 0 1 0 7" fill="none" stroke="#fff" stroke-width="1.700" stroke-linecap="round"/><path d="M17 6a8.500 8.500 0 0 1 0 12M20 3.500a12 12 0 0 1 0 17" fill="none" stroke="#666" stroke-width="1.500" stroke-linecap="round"/></svg>
      <svg class="i24" viewBox="0 0 24 24"><path d="M9 6.500h9.500Q21 6.500 21 9v8q0 2.500-2.500 2.500H4Q1.500 19.500 1.500 17v-4" fill="none" stroke="#fff" stroke-width="1.800"/><path d="M22 10.500q2 0 2 2t-2 2zM4 17.500V13.500L10 8.500V17.500zM4.500 0 0 8h3L1.500 13 8 5H5z" fill="#fff"/></svg>
    </button>
    <button class="plain text-end">09:48<br>14/07/2023</button>
    <button class="plain" aria-label="Notifications"><svg class="i24" viewBox="0 0 24 24"><path d="M11 2Q3.500 2 3.500 10v5L1 19h20l-2.500-4V10Q18.500 2 11 2zM7 20.500h8q-1 3-4 3t-4-3z" fill="#fff"/><text x="7" y="15" font-family="Open Sans, sans-serif" font-weight="700" font-size="11" fill="#1f2322">Z</text><path d="M13.500 0h10v10h-7z" fill="#1f2322"/><text x="15.500" y="9" font-family="Open Sans, sans-serif" font-weight="700" font-size="11" fill="#fff">Z</text></svg></button>
  </div>
</footer>

<script>
  const tpl = document.getElementById('sidebar');
  document.querySelectorAll('.side').forEach(el => el.append(tpl.content.cloneNode(true)));
</script>
</body>
</html>
